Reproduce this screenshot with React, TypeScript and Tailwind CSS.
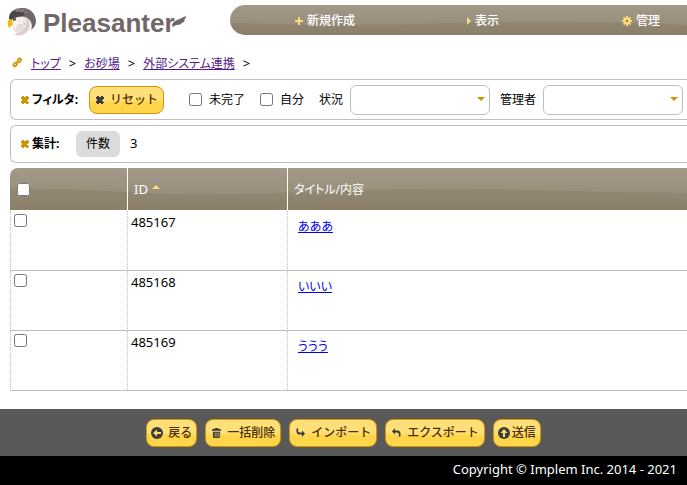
import type { ReactNode } from "react";

type IconProps = { className?: string };

const CrossIcon = ({ className }: IconProps) => (
  <svg viewBox="0 0 8 8" className={className} fill="currentColor" aria-hidden>
    <path d="M0 1h1V0h2v1h1v1V1h1V0h2v1h1v2H7v1H6v1h1v1h1v1H7v1H5V7H3v1H1V7H0V5h1V4h1V4H1V3H0z" />
  </svg>
);

const PlusIcon = () => (
  <svg viewBox="0 0 8 8" className="size-2 text-[#ffdb75]" fill="currentColor" aria-hidden>
    <path d="M3 0h2v3h3v2H5v3H3V5H0V3h3z" />
  </svg>
);

const TriangleRightIcon = () => (
  <svg viewBox="0 0 4 8" className="h-2 w-1 text-[#ffdb75]" fill="currentColor" aria-hidden>
    <path d="M0 0l4 4-4 4z" />
  </svg>
);

const GearIcon = () => (
  <svg viewBox="0 0 10 10" className="size-[10px] text-[#ffdb75]" aria-hidden>
    <g stroke="currentColor" strokeWidth="2">
      <path d="M5 0v10M0 5h10M1.500 1.500l7 7M8.500 1.500l-7 7" />
    </g>
    <circle cx="5" cy="5" r="3.2" fill="currentColor" />
    <path d="M4 4h2v2H4z" fill="#8b7a4c" />
  </svg>
);

const LinkIcon = () => (
  <svg viewBox="0 0 12 12" className="mb-1 size-[11px]" fill="none" stroke="#d19405" strokeWidth="2" aria-hidden>
    <ellipse cx="3.6" cy="8.2" rx="2.3" ry="1.5" transform="rotate(-50 3.6 8.2)" />
    <ellipse cx="7.9" cy="3.8" rx="2.3" ry="1.5" transform="rotate(-50 7.9 3.8)" />
  </svg>
);

const CircleArrowIcon = ({ className }: IconProps) => (
  <svg viewBox="0 0 12 12" className={className} aria-hidden>
    <circle cx="6" cy="6" r="6" fill="#3d3d3d" />
    <path d="M2 6l4-3.500V5h4v2H6v2.500z" fill="#ffdb6a" />
  </svg>
);

const TrashIcon = () => (
  <svg viewBox="0 0 10 11" className="mt-px h-[10px] w-[9px]" aria-hidden>
    <path fill="#3d3d3d" d="M3 0h4v1h3v2H0V1h3zM1 4h8v6l-1 1H2l-1-1z" />
    <path stroke="#ffd85c" d="M3.500 5v5M5.500 5v5M7.500 5v5" strokeWidth=".7" />
  </svg>
);

const ArrowRightTurnIcon = () => (
  <svg viewBox="0 0 9 9" className="size-[9px]" aria-hidden>
    <path fill="#3d3d3d" d="M1 0C0 2 0 6 3 6.500h3V9l3-3.500L6 2.500v2H4C2 4.500 1.500 2 2.500 1z" />
  </svg>
);

const ArrowLeftTurnIcon = () => (
  <svg viewBox="0 0 9 9" className="size-[9px]" aria-hidden>
    <path fill="#3d3d3d" d="M8 9c1-2 1-6-2-6.500H3V0L0 3.500l3 3v-2h2C7 4.500 7.500 7 6.500 8z" />
  </svg>
);

const BirdLogo = () => (
  <svg viewBox="0 0 30 30" className="size-[30px] shrink-0" aria-hidden>
    <path fill="#e9deda" d="M5 11C11 6 21 7 23 15c1 6-2 11-7 13-4 1-7 1-9-1 2 0 2 0 3-1-3-1-4-4-4-7z" />
    <path fill="#f8f3f0" d="M6 12c5-3 11-2 12 2-1 3-4 3-7 3-2 2-3 4-2 7-3-3-4-7-3-12z" />
    <path fill="#d6caca" d="M20 12c4 6 2 13-5 15-3 1-6 1-8 0 8 0 14-6 13-15z" />
    <path fill="#716769" d="M2 12C2 7 4 4 7 3c3-2 6-2 9-2 8 0 13 7 13 13 0 4-2 7-5 9 2-5 0-10-4-12C15 8 9 10 4 13z" />
    <path fill="#4c4548" d="M2 12C2 8 4 5 7 4l6 1 7 1-4 3-7 1-5 3z" />
    <path
      fill="none"
      stroke="#aaa0a2"
      strokeWidth="1"
      d="M10 5c0-2 1-2 3-3M14 5c0-2 1-2 3-2M18 7c0-2 1-2 2-2"
    />
    <path fill="#edbc14" d="M1 14c1-2 3-2 4-1l1 4c0 1-2 1-3 4-2-1-3-4-2-7z" />
    <path fill="#4c4548" d="M6 12l3-1v2l-3 1z" />
    <path stroke="#b8adad" strokeWidth="1" d="M12 14h1m3 1h1m-4 3h1m3-1h1" />
  </svg>
);

const Wave = ({ d, viewBox }: { d: string; viewBox: string }) => (
  <svg
    viewBox={viewBox}
    preserveAspectRatio="none"
    className="pointer-events-none absolute inset-0 h-full w-full"
    aria-hidden
  >
    <path d={d} fill="#6a5a3a" fillOpacity=".16" />
  </svg>
);

type GoldButtonProps = { icon: ReactNode; children: ReactNode; className: string };

const GoldButton = ({ icon, children, className }: GoldButtonProps) => (
  <button
    type="button"
    className={`flex h-7 items-center rounded-lg border border-[#d19405] bg-linear-to-b from-[#ffdf78] from-50% to-[#ffd54a] to-60% text-xs font-medium whitespace-nowrap text-[#4c3000] ${className}`}
  >
    {icon}
    {children}
  </button>
);

const FilterSelect = ({ id, label }: { id: string; label: string }) => (
  <div className="flex shrink-0 items-center gap-[7px]">
    <label htmlFor={id}>{label}</label>
    <div className="relative">
      <select
        id={id}
        className="block h-[30px] w-[140px] appearance-none rounded-md border border-[#c0c0c0] bg-white"
      />
      <svg viewBox="0 0 8 4" className="pointer-events-none absolute top-3 right-[5px] h-1 w-2" aria-hidden>
        <path d="M0 0h8L4 4z" fill="#d19405" />
      </svg>
    </div>
  </div>
);

const crumbs = ["トップ", "お砂場", "外部システム連携"];

const menuItems = [
  { label: "新規作成", icon: <PlusIcon /> },
  { label: "表示", icon: <TriangleRightIcon /> },
  { label: "管理", icon: <GearIcon /> },
];

const records = [
  { id: 485167, title: "あああ" },
  { id: 485168, title: "いいい" },
  { id: 485169, title: "ううう" },
];

export default function App() {
  return (
    <div className="flex min-h-screen flex-col overflow-hidden bg-white font-['Noto_Sans','Noto_Sans_CJK_JP',sans-serif] text-xs text-black">
      <header className="flex h-10 items-center">
        <a href="#" className="flex w-[230px] shrink-0 items-center gap-[6px] pt-1 pl-[7px] text-[#716769]">
          <BirdLogo />
          <span className="flex items-center pt-px font-['Liberation_Sans',sans-serif] text-[26px] leading-8 font-bold">
            Pleasanter
            <svg viewBox="0 0 15 14" className="-ml-[3px] h-[14px] w-[15px]" fill="currentColor" aria-hidden>
              <path d="M0 9C2 4 6 4 14 0c0 2-1 3-2 4h1c-1 2-2 3-4 3h1C8 9 6 9 4 9L1 11z" />
            </svg>
          </span>
        </a>
        <nav className="relative h-[30px] min-w-0 flex-1 overflow-hidden rounded-l-full bg-linear-to-b from-[#a29989] to-[#928874]">
          <Wave viewBox="0 0 457 30" d="M0 18C60 19 110 21 190 19S330 15 457 20V30H0z" />
          <ul className="relative flex h-full pt-px pl-4 text-white">
            {menuItems.map((item) => (
              <li key={item.label} className="w-[158px] shrink-0">
                <button type="button" className="flex h-full w-full items-center justify-center gap-1 font-medium">
                  {item.icon}
                  {item.label}
                </button>
              </li>
            ))}
          </ul>
        </nav>
      </header>

      <nav className="mt-3 flex h-6 items-center pl-3">
        <LinkIcon />
        <ol className="ml-2 flex gap-2 [font-feature-settings:'palt']">
          {crumbs.map((crumb) => (
            <li key={crumb} className="flex items-center gap-2">
              <a href="#" className="text-[#551a8b] underline">
                {crumb}
              </a>
              <span className="text-[13px]">&gt;</span>
            </li>
          ))}
        </ol>
      </nav>

      <main className="mb-[18px] pl-[10px]">
        <section className="mt-[3px] flex h-[41px] items-center rounded-l-md border border-r-0 border-[#c0c0c0] pl-[10px]">
          <h2 className="flex w-[68px] shrink-0 items-center gap-[3px] font-bold [font-feature-settings:'palt']">
            <CrossIcon className="size-2 text-[#d19405]" />
            フィルタ:
          </h2>
          <GoldButton className="shrink-0 gap-[6px] pr-[5px] pl-[6px]" icon={<CrossIcon className="size-2 text-[#3d3d3d]" />}>
            リセット
          </GoldButton>
          <label className="ml-[25px] flex shrink-0 items-center gap-[7px]">
            <input type="checkbox" className="size-[13px]" />
            未完了
          </label>
          <label className="mr-[15px] ml-[15px] flex shrink-0 items-center gap-[7px]">
            <input type="checkbox" className="size-[13px]" />
            自分
          </label>
          <div className="flex gap-[10px]">
            <FilterSelect id="status" label="状況" />
            <FilterSelect id="manager" label="管理者" />
          </div>
        </section>

        <section className="mt-[5px] flex h-[38px] items-center rounded-l-md border border-r-0 border-[#c0c0c0] pl-[10px]">
          <h2 className="flex w-[55px] items-center gap-[3px] font-bold">
            <CrossIcon className="size-2 text-[#d19405]" />
            集計:
          </h2>
          <span className="rounded-md bg-[#dcdcdc] px-[10px] py-[5px]">件数</span>
          <span className="ml-[10px] text-[13px]">3</span>
        </section>

        <div className="relative mt-[5px] overflow-hidden rounded-tl-lg">
          <div className="absolute inset-x-0 top-0 h-[42px] bg-linear-to-b from-[#a29989] to-[#928874]">
            <Wave viewBox="0 0 677 42" d="M0 21C80 20 120 26 200 26S360 21 430 21S580 24 677 25V42H0z" />
          </div>
          <table className="relative w-full table-fixed border-separate border-spacing-0 text-left">
            <colgroup>
              <col className="w-[117px]" />
              <col className="w-[160px]" />
              <col />
            </colgroup>
            <thead className="text-white">
              <tr className="h-[43px]">
                <th className="pl-[7px]">
                  <input type="checkbox" aria-label="すべて選択" className="block size-[13px]" />
                </th>
                <th className="border-l border-white pl-[6px] text-[13px] font-normal">
                  <span className="flex gap-1">
                    ID
                    <svg viewBox="0 0 8 4" className="mt-1 h-1 w-2" aria-hidden>
                      <path d="M0 4h8L4 0z" fill="#ffdb75" />
                    </svg>
                  </span>
                </th>
                <th className="border-l border-white pl-[6px] font-normal [font-feature-settings:'palt']">
                  タイトル/内容
                </th>
              </tr>
            </thead>
            <tbody>
              {records.map((record) => (
                <tr key={record.id} className="h-[60px] align-top">
                  <td className="border-b border-l border-[#c0c0c0] pt-[3px] pl-[3px] [border-left-style:dotted]">
                    <input type="checkbox" aria-label={String(record.id)} className="block size-[13px]" />
                  </td>
                  <td className="border-b border-l border-[#c0c0c0] pt-[3px] pl-[3px] text-[13px] [border-left-style:dotted]">
                    {record.id}
                  </td>
                  <td className="border-b border-l border-[#c0c0c0] pt-2 pl-[10px] [border-left-style:dotted]">
                    <a href="#" className="text-[#0000ee] underline [font-feature-settings:'palt']">
                      {record.title}
                    </a>
                  </td>
                </tr>
              ))}
            </tbody>
          </table>
        </div>
      </main>

      <div className="mt-auto flex h-[47px] shrink-0 items-center justify-center gap-2 bg-[#595959]">
        <GoldButton className="gap-[5px] px-1" icon={<CircleArrowIcon className="size-3" />}>
          戻る
        </GoldButton>
        <GoldButton className="gap-[6px] pr-[5px] pl-[6px]" icon={<TrashIcon />}>
          一括削除
        </GoldButton>
        <GoldButton className="gap-[6px] pr-[5px] pl-[6px]" icon={<ArrowRightTurnIcon />}>
          インポート
        </GoldButton>
        <GoldButton className="gap-[6px] pr-[5px] pl-[6px]" icon={<ArrowLeftTurnIcon />}>
          エクスポート
        </GoldButton>
        <GoldButton className="gap-[2px] px-1" icon={<CircleArrowIcon className="size-3 rotate-90" />}>
          送信
        </GoldButton>
      </div>
      <footer className="h-[29px] shrink-0 bg-black pt-[3px] pr-[10px] text-right text-[13px] leading-5 text-white">
        Copyright © Implem Inc. 2014 - 2021
      </footer>
    </div>
  );
}
